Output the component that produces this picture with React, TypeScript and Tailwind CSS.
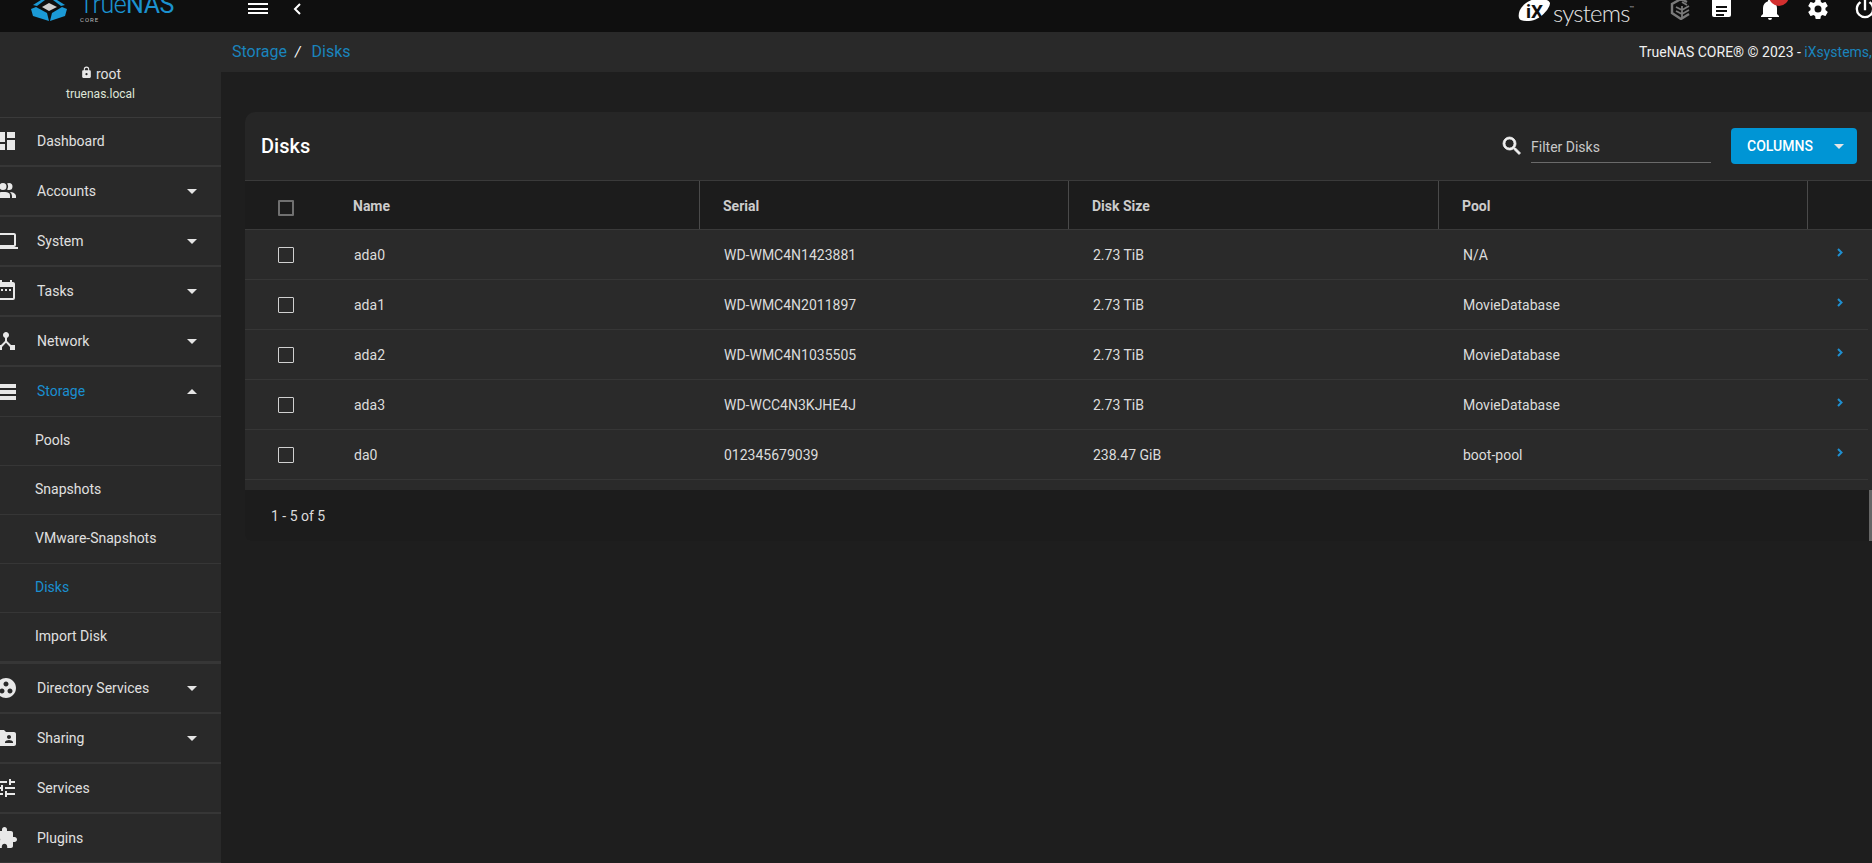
import React from "react";

const P = {
  dashboard: "M13,3V9H21V3M13,21H21V11H13M3,21H11V15H3M3,13H11V3H3V13Z",
  accounts: "M16 17V19H2V17S2 13 9 13 16 15 16 17M12.5 7.5A3.5 3.5 0 1 0 9 11A3.5 3.5 0 0 0 12.5 7.5M15.94 13A5.32 5.32 0 0 1 18 17V19H22V17S22 13.37 15.94 13M15 4A3.39 3.39 0 0 0 13.07 4.59A5 5 0 0 1 13.07 10.41A3.39 3.39 0 0 0 15 11A3.5 3.5 0 0 0 15 4Z",
  system: "M4,6H20V16H4M20,18A2,2 0 0,0 22,16V6C22,4.89 21.1,4 20,4H4C2.89,4 2,4.89 2,6V16A2,2 0 0,0 4,18H0V20H24V18H20Z",
  tasks: "M19,19H5V8H19M16,1V3H8V1H6V3H5C3.89,3 3,3.89 3,5V19A2,2 0 0,0 5,21H19A2,2 0 0,0 21,19V5C21,3.89 20.1,3 19,3H18V1M7,10H9V12H7V10M11,10H13V12H11V10M15,10H17V12H15V10Z",
  network: "M17 16l-4-4V8.82C14.16 8.4 15 7.3 15 6c0-1.66-1.34-3-3-3S9 4.34 9 6c0 1.3.84 2.4 2 2.82V12l-4 4H3v5h5v-3.05l4-4.2 4 4.2V21h5v-5h-4z",
  storage: "M2 4h20v4H2zM2 10h20v4H2zM2 16h20v4H2z",
  directory: "M12 2C6.48 2 2 6.48 2 12s4.48 10 10 10 10-4.48 10-10S17.52 2 12 2zM8 17.5c-1.38 0-2.5-1.12-2.5-2.5s1.12-2.5 2.5-2.5 2.5 1.12 2.5 2.5-1.12 2.5-2.5 2.5zM9.5 8c0-1.38 1.12-2.5 2.5-2.5s2.5 1.12 2.5 2.5-1.12 2.5-2.5 2.5S9.5 9.38 9.5 8zm6.5 9.5c-1.38 0-2.5-1.12-2.5-2.5s1.12-2.5 2.5-2.5 2.5 1.12 2.5 2.5-1.12 2.5-2.5 2.5z",
  sharing: "M20 6h-8l-2-2H4c-1.1 0-1.99.9-1.99 2L2 18c0 1.1.9 2 2 2h16c1.1 0 2-.9 2-2V8c0-1.1-.9-2-2-2zm-5 3c1.1 0 2 .9 2 2s-.9 2-2 2-2-.9-2-2 .9-2 2-2zm4 8h-8v-1c0-1.33 2.67-2 4-2s4 .67 4 2v1z",
  services: "M3 17v2h6v-2H3zM3 5v2h10V5H3zm10 16v-2h8v-2h-8v-2h-2v6h2zM7 9v2H3v2h4v2h2V9H7zm14 4v-2H11v2h10zm-6-4h2V7h4V5h-4V3h-2v6z",
  plugins: "M20.5 11H19V7c0-1.1-.9-2-2-2h-4V3.5C13 2.12 11.88 1 10.5 1S8 2.12 8 3.5V5H4c-1.1 0-1.99.9-1.99 2v3.8H3.5c1.49 0 2.7 1.21 2.7 2.7s-1.21 2.7-2.7 2.7H2V20c0 1.1.9 2 2 2h3.8v-1.5c0-1.49 1.21-2.7 2.7-2.7 1.49 0 2.7 1.21 2.7 2.7V22H17c1.1 0 2-.9 2-2v-4h1.5c1.38 0 2.5-1.12 2.5-2.5S21.88 11 20.5 11z",
  bell: "M21,19V20H3V19L5,17V11C5,7.9 7.03,5.17 10,4.29C10,4.19 10,4.1 10,4A2,2 0 0,1 12,2A2,2 0 0,1 14,4C14,4.1 14,4.19 14,4.29C16.97,5.17 19,7.9 19,11V17L21,19M14,21A2,2 0 0,1 12,23A2,2 0 0,1 10,21",
  cog: "M12,15.5A3.5,3.5 0 0,1 8.5,12A3.5,3.5 0 0,1 12,8.5A3.5,3.5 0 0,1 15.5,12A3.5,3.5 0 0,1 12,15.5M19.43,12.97C19.47,12.65 19.5,12.33 19.5,12C19.5,11.67 19.47,11.34 19.43,11L21.54,9.37C21.73,9.22 21.78,8.95 21.66,8.73L19.66,5.27C19.54,5.05 19.27,4.96 19.05,5.05L16.56,6.05C16.04,5.66 15.5,5.32 14.87,5.07L14.5,2.42C14.46,2.18 14.25,2 14,2H10C9.75,2 9.54,2.18 9.5,2.42L9.13,5.07C8.5,5.32 7.96,5.66 7.44,6.05L4.95,5.05C4.73,4.96 4.46,5.05 4.34,5.27L2.34,8.73C2.21,8.95 2.27,9.22 2.46,9.37L4.57,11C4.53,11.34 4.5,11.67 4.5,12C4.5,12.33 4.53,12.65 4.57,12.97L2.46,14.63C2.27,14.78 2.21,15.05 2.34,15.27L4.34,18.73C4.46,18.95 4.73,19.03 4.95,18.95L7.44,17.94C7.96,18.34 8.5,18.68 9.13,18.93L9.5,21.58C9.54,21.82 9.75,22 10,22H14C14.25,22 14.46,21.82 14.5,21.58L14.87,18.93C15.5,18.67 16.04,18.34 16.56,17.94L19.05,18.95C19.27,19.03 19.54,18.95 19.66,18.73L21.66,15.27C21.78,15.05 21.73,14.78 21.54,14.63L19.43,12.97Z",
  power: "M16.56,5.44L15.11,6.89C16.84,7.94 18,9.83 18,12A6,6 0 0,1 12,18A6,6 0 0,1 6,12C6,9.83 7.16,7.94 8.88,6.88L7.44,5.44C5.36,6.88 4,9.28 4,12A8,8 0 0,0 12,20A8,8 0 0,0 20,12C20,9.28 18.64,6.88 16.56,5.44M13,3H11V13H13",
  search: "M9.5,3A6.5,6.5 0 0,1 16,9.5C16,11.11 15.41,12.59 14.44,13.73L14.71,14H15.5L20.5,19L19,20.5L14,15.5V14.71L13.73,14.44C12.59,15.41 11.11,16 9.5,16A6.5,6.5 0 0,1 3,9.5A6.5,6.5 0 0,1 9.5,3M9.5,5C7,5 5,7 5,9.5C5,12 7,14 9.5,14C12,14 14,12 14,9.5C14,7 12,5 9.5,5Z",
  lock: "M12,17A2,2 0 0,0 14,15C14,13.89 13.1,13 12,13A2,2 0 0,0 10,15A2,2 0 0,0 12,17M18,8A2,2 0 0,1 20,10V20A2,2 0 0,1 18,22H6A2,2 0 0,1 4,20V10C4,8.89 4.9,8 6,8H7V6A5,5 0 0,1 12,1A5,5 0 0,1 17,6V8H18M12,3A3,3 0 0,0 9,6V8H15V6A3,3 0 0,0 12,3Z",
};

function Icon({ d, className }: { d: string; className?: string }) {
  return (
    <svg viewBox="0 0 24 24" fill="currentColor" className={className}>
      <path d={d} />
    </svg>
  );
}

function Caret({ up }: { up?: boolean }) {
  return (
    <svg viewBox="0 0 10 5" className="w-[10px] h-[5px] text-[#e5e5e5]" fill="currentColor">
      <polygon points={up ? "0,5 5,0 10,5" : "0,0 10,0 5,5"} />
    </svg>
  );
}

function MainRow({ icon, label, caret, active, h = "h-[50px]", thin }: { icon: string; label: string; caret?: "up" | "down"; active?: boolean; h?: string; thin?: boolean }) {
  return (
    <div className={`${h} flex items-center shrink-0 ${thin ? "border-b border-[#363636]" : "border-b-2 border-[#363636]"}`}>
      <Icon d={icon} className="w-6 h-6 -ml-[6px] text-[#e8e8e8] shrink-0" />
      <span className={`ml-[19px] flex-1 text-sm ${active ? "text-[#1a8fd0] pb-px" : "text-[#e0e0e0]"}`}>{label}</span>
      {caret && <span className="mr-[24px] flex"><Caret up={caret === "up"} /></span>}
    </div>
  );
}

function SubRow({ label, active, last }: { label: string; active?: boolean; last?: boolean }) {
  return (
    <div className={`${last ? "h-[48px]" : "h-[49px] border-b border-[#363636]"} shrink-0 flex items-center pl-[35px] pb-[2px] text-sm ${active ? "text-[#1a8fd0]" : "text-[#e0e0e0]"}`}>
      {label}
    </div>
  );
}

function Box({ head }: { head?: boolean }) {
  return <span className={`block w-4 h-4 rounded-[1px] border ${head ? "border-2 border-[#707070]" : "border-[#d0d0d0]"}`} />;
}

const cols = "grid grid-cols-[108px_347px_369px_370px_369px_1fr]";

const rows = [
  ["ada0", "WD-WMC4N1423881", "2.73 TiB", "N/A"],
  ["ada1", "WD-WMC4N2011897", "2.73 TiB", "MovieDatabase"],
  ["ada2", "WD-WMC4N1035505", "2.73 TiB", "MovieDatabase"],
  ["ada3", "WD-WCC4N3KJHE4J", "2.73 TiB", "MovieDatabase"],
  ["da0", "012345679039", "238.47 GiB", "boot-pool"],
];

export default function App() {
  return (
    <div className="w-[1872px] h-[863px] overflow-hidden flex flex-col bg-[#1e1e1e] font-['Roboto',sans-serif]">
      <header className="h-8 shrink-0 bg-[#0f0f0f] flex overflow-hidden">
        <div className="w-[221px] shrink-0 flex">
          <svg viewBox="0 0 38 22" className="w-[38px] h-[22px] ml-[30px] shrink-0">
            <polygon points="1,9 6,7 17,13 19,21 3,16" fill="#1b9ad6" />
            <polygon points="37,9 32,7 22,13 20,21 35,16" fill="#1b9ad6" />
            <polygon points="3,5 11,0 15,0 7,6" fill="#1b9ad6" />
            <polygon points="35,5 27,0 23,0 31,6" fill="#1b9ad6" />
            <polygon points="19,3 12,7 19,11 27,7" fill="#cfcfcf" />
          </svg>
          <div className="ml-[11px] h-8 w-[100px]">
            <div className="-mt-[13px] text-[25px] leading-[36px] font-light tracking-[-0.5px] text-[#1b92cf] whitespace-nowrap">
              True<span className="font-normal">NAS</span>
            </div>
            <div className="mt-0 -translate-y-[7px] text-[6px] leading-[8px] tracking-[1px] text-[#bbbbbb] ml-px">CORE</div>
          </div>
        </div>
        <div className="ml-[27px] mt-[3px] w-5 h-[11px] flex flex-col justify-between">
          <span className="block h-0.5 bg-white" />
          <span className="block h-0.5 bg-white" />
          <span className="block h-0.5 bg-white" />
        </div>
        <svg viewBox="0 0 8 12" className="ml-[25px] mt-[3px] w-2 h-3" fill="none" stroke="#fff" strokeWidth="2">
          <path d="M7,1 L2,6 L7,11" />
        </svg>
        <div className="flex-1" />
        <svg viewBox="0 0 34 22" className="w-[34px] h-[22px] shrink-0">
          <path d="M2,18 C0,10 8,1 18,-1 C26,-2 32,0 33,3 C33,8 24,20 12,21 C7,21 3,21 2,18Z" fill="#fff" />
          <text x="9" y="18" fontSize="19" fontWeight="700" fontFamily="Roboto" fill="#0f0f0f">iX</text>
        </svg>
        <div className="ml-[2px] mr-[33px] -mt-[10px] text-[24px] leading-[36px] font-light text-[#e5e5e5] w-[84px] tracking-[-0.8px] font-['Lato',sans-serif] whitespace-nowrap">
          systems<span className="align-[12px] text-[6px] tracking-normal">™</span>
        </div>
        <svg viewBox="0 0 22 20" className="w-[22px] h-5 shrink-0 text-[#7a7a7a]" fill="none" stroke="currentColor" strokeWidth="2.4">
          <path d="M17,2 L11,-1 L2,4 L2,13 L11,19 L19,14" />
          <path d="M6,7 L12,10 L19,6 M6,11 L12,14 L19,10 M12,6 L12,18 M17,5 L12,2" strokeWidth="1.8" />
        </svg>
        <div className="ml-5 w-[19px] h-[17px] rounded-b-[2px] bg-white shrink-0 flex flex-col justify-center gap-[2px] px-1 pt-1">
          <span className="block h-0.5 bg-[#0f0f0f]" />
          <span className="block h-0.5 bg-[#0f0f0f]" />
          <span className="block h-0.5 w-2 bg-[#0f0f0f]" />
        </div>
        <div className="relative ml-[27px] w-6 h-6 -mt-[3px] shrink-0">
          <Icon d={P.bell} className="w-6 h-6 text-white" />
          <span className="absolute left-[11px] -top-[11px] w-5 h-5 rounded-full bg-[#d32f2f] text-white text-[13px] leading-5 text-center">2</span>
        </div>
        <Icon d={P.cog} className="ml-[24px] w-6 h-6 -mt-[3px] text-white shrink-0" />
        <Icon d={P.power} className="ml-[21px] -mr-[7px] w-7 h-7 -mt-[5px] text-white shrink-0" />
      </header>

      <div className="flex-1 flex min-h-0">
        <aside className="w-[221px] shrink-0 bg-[#292929] flex flex-col overflow-hidden">
          <div className="h-[86px] shrink-0 border-b border-[#3a3a3a] flex flex-col items-center pr-[20px] text-[#e0e0e0]">
            <div className="mt-[32px] h-5 flex items-center text-sm">
              <Icon d={P.lock} className="w-[13px] h-[13px] mr-[3px] -mt-[3px] text-[#e8e8e8]" />
              <span>root</span>
            </div>
            <div className="mt-[1px] text-xs leading-[18px] text-[#dfe6d8]">truenas.local</div>
          </div>
          <MainRow icon={P.dashboard} label="Dashboard" h="h-[49px] pb-px" />
          <MainRow icon={P.accounts} label="Accounts" caret="down" />
          <MainRow icon={P.system} label="System" caret="down" />
          <MainRow icon={P.tasks} label="Tasks" caret="down" />
          <MainRow icon={P.network} label="Network" caret="down" />
          <MainRow icon={P.storage} label="Storage" caret="up" active thin />
          <SubRow label="Pools" />
          <SubRow label="Snapshots" />
          <SubRow label="VMware-Snapshots" />
          <SubRow label="Disks" active />
          <SubRow label="Import Disk" last />
          <div className="h-[3px] shrink-0 bg-[#363636]" />
          <MainRow icon={P.directory} label="Directory Services" caret="down" />
          <MainRow icon={P.sharing} label="Sharing" caret="down" />
          <MainRow icon={P.services} label="Services" />
          <MainRow icon={P.plugins} label="Plugins" />
        </aside>

        <main className="flex-1 min-w-0 flex flex-col overflow-hidden">
          <div className="h-10 shrink-0 bg-[#292929] flex items-center pl-[11px] whitespace-nowrap">
            <span className="text-base text-[#1a84bd]">Storage</span>
            <span className="ml-[8px] text-sm italic text-white">/</span>
            <span className="ml-[11px] text-base text-[#1a84bd]">Disks</span>
            <div className="flex-1" />
            <span className="text-sm text-[#f0f0f0] w-[233px] overflow-hidden">
              TrueNAS CORE® © 2023 - <span className="text-[#1a84bd]">iXsystems, Inc.</span>
            </span>
          </div>

          <section className="ml-6 mt-10 h-[429px] rounded-tl-[10px] rounded-bl-[6px] bg-[#262626] flex flex-col overflow-hidden">
            <div className="h-[69px] shrink-0 flex items-center border-b border-[#3a3a3a] pl-4 pr-[15px]">
              <h1 className="text-xl font-medium text-white flex-1">Disks</h1>
              <svg viewBox="0 0 24 24" fill="currentColor" stroke="currentColor" strokeWidth="0.8" className="w-6 h-6 text-[#f0f0f0] mr-[7px]"><path d={P.search} /></svg>
              <div className="w-[180px] h-8 mt-[1px] border-b border-[#6a6a6a] text-sm text-[#c8c8c8] leading-[32px]">Filter Disks</div>
              <button className="ml-5 w-[126px] h-9 rounded bg-[#0095d5] flex items-center pl-4 text-sm font-medium text-white">
                COLUMNS
                <span className="ml-[21px] flex"><Caret /></span>
              </button>
            </div>
            <div className={`${cols} h-[49px] shrink-0 bg-[#1c1c1c] border-b border-[#3a3a3a] text-sm font-bold text-[#cccccc]`}>
              <div className="flex items-center pl-[33px] pt-[6px]"><Box head /></div>
              <div className="flex items-center pt-px border-r border-[#4a4a4a]">Name</div>
              <div className="flex items-center pt-px pl-[23px] border-r border-[#4a4a4a]">Serial</div>
              <div className="flex items-center pt-px pl-[23px] border-r border-[#4a4a4a]">Disk Size</div>
              <div className="flex items-center pt-px pl-[23px] border-r border-[#4a4a4a]">Pool</div>
              <div />
            </div>
            <div className="bg-[#2a2a2a] h-[260px] shrink-0 pr-1 text-sm text-[#dcdcdc]">
              {rows.map((r) => (
                <div key={r[0]} className={`${cols} h-[50px] border-b border-[#363636]`}>
                  <div className="flex items-center pl-[33px]"><Box /></div>
                  <div className="flex items-center pl-px">{r[0]}</div>
                  <div className="flex items-center pl-6">{r[1]}</div>
                  <div className="flex items-center pl-6">{r[2]}</div>
                  <div className="flex items-center pl-6">{r[3]}</div>
                  <div className="flex items-center pl-[29px] pb-[5px]">
                    <svg viewBox="0 0 6 9" className="w-[6px] h-[9px]" fill="none" stroke="#1f8fd0" strokeWidth="2"><path d="M1,1 L4.5,4.5 L1,8" /></svg>
                  </div>
                </div>
              ))}
            </div>
            <div className="flex-1 bg-[#1c1c1c] flex items-center justify-between pl-[26px] text-sm text-[#dcdcdc]">
              <span>1 - 5 of 5</span>
              <span className="w-[3px] h-full bg-[#666666]" />
            </div>
          </section>
        </main>
      </div>
    </div>
  );
}
